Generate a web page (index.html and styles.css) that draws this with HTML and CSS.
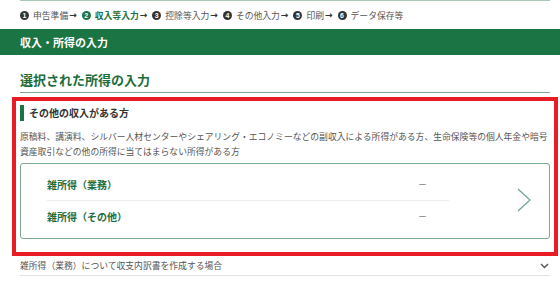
FILE: index.html
```html
<!DOCTYPE html>
<html lang="ja">
<head>
    <meta charset="UTF-8">
    <title>収入・所得の入力</title>
    <link rel="stylesheet" href="styles.css">
</head>
<body>
    <div class="topline"></div>

    <!-- ステップ -->
    <ol class="steps">
        <li><span class="num">1</span>申告準備</li>
        <li class="arrow">→</li>
        <li class="current"><span class="num">2</span>収入等入力</li>
        <li class="arrow">→</li>
        <li><span class="num">3</span>控除等入力</li>
        <li class="arrow">→</li>
        <li><span class="num">4</span>その他入力</li>
        <li class="arrow">→</li>
        <li><span class="num">5</span>印刷</li>
        <li class="arrow">→</li>
        <li><span class="num">6</span>データ保存等</li>
    </ol>

    <div class="band">収入・所得の入力</div>

    <div class="main">
        <h1 class="title">選択された所得の入力</h1>

        <!-- その他の収入 -->
        <div class="section">
            <h2>その他の収入がある方</h2>
            <p class="desc">原稿料、講演料、シルバー人材センターやシェアリング・エコノミーなどの副収入による所得がある方、生命保険等の個人年金や暗号資産取引などの他の所得に当てはまらない所得がある方</p>

            <a class="card" href="#">
                <div class="rows">
                    <div class="row"><span class="name">雑所得（業務）</span><span class="value">－</span></div>
                    <div class="row"><span class="name">雑所得（その他）</span><span class="value">－</span></div>
                </div>
                <svg class="chev" width="15" height="24" viewBox="0 0 15 24">
                    <path d="M1 1 L13 12 L1 23" fill="none" stroke="#6fa489" stroke-width="1.2"/>
                </svg>
            </a>
        </div>

        <div class="accordion">
            <span>雑所得（業務）について収支内訳書を作成する場合</span>
            <svg width="9" height="6" viewBox="0 0 9 6">
                <path d="M1 1 L4.5 4.5 L8 1" fill="none" stroke="#555" stroke-width="1.4"/>
            </svg>
        </div>
    </div>
</body>
</html>
```

FILE: styles.css
```css
/* 基本 */
* {
    margin: 0;
    padding: 0;
    box-sizing: border-box;
}

body {
    background: #fff;
    color: #333;
    font-family: "Noto Sans CJK JP", "Noto Sans", sans-serif;
    width: 560px;
    overflow: hidden;
}

.topline {
    height: 1px;
    margin: 0 10px 0 20px;
    background: #a9c9b6;
}

/* ステップ */
.steps {
    list-style: none;
    display: flex;
    align-items: center;
    height: 28px;
    padding-left: 20px;
    font-size: 8.8px;
    color: #555;
}

.steps li {
    display: flex;
    align-items: center;
}

.steps .num {
    display: inline-flex;
    align-items: center;
    justify-content: center;
    width: 9px;
    height: 9px;
    margin-right: 4px;
    border-radius: 50%;
    background: #333;
    color: #fff;
    font-size: 7px;
    font-weight: bold;
    font-family: "Liberation Sans", sans-serif;
}

.steps .arrow {
    margin: 0 5px 0 1px;
    font-weight: bold;
    color: #333;
    font-family: "DejaVu Sans", sans-serif;
    font-size: 9px;
}

.steps .current {
    color: #1a7443;
    font-weight: bold;
}

.steps .current .num {
    background: #1a7443;
}

/* 見出し帯 */
.band {
    height: 26px;
    line-height: 26px;
    padding-left: 20px;
    background: #1a7443;
    color: #fff;
    font-size: 11px;
    font-weight: bold;
}

.main {
    padding: 0 10px 0 20px;
}

.title {
    margin-top: 16px;
    padding-bottom: 3px;
    line-height: 18px;
    font-size: 13px;
    font-weight: bold;
    color: #1d6e3d;
    border-bottom: 1px solid #7fa893;
}

/* セクション */
.section {
    margin-top: 12px;
    padding-bottom: 9px;
    outline: 4px solid #e81c24;
    outline-offset: 4px;
}

.section h2 {
    border-left: 4px solid #1a7443;
    padding-left: 5px;
    line-height: 16px;
    font-size: 10px;
    font-weight: bold;
    color: #333;
}

.desc {
    margin-top: 8px;
    line-height: 15px;
    font-size: 8.8px;
    color: #555;
}

.card {
    display: flex;
    align-items: center;
    margin-top: 4px;
    padding: 5px 0 7px;
    border: 1px solid #7aab92;
    border-radius: 3px;
    text-decoration: none;
}

.rows {
    width: 402px;
    margin-left: 26px;
}

.row {
    display: flex;
    justify-content: space-between;
    align-items: center;
    height: 32px;
    font-size: 10px;
}

.row:first-child {
    border-bottom: 1px solid #ececec;
}

.row:last-child {
    height: 30px;
}

.row .name {
    color: #1d6e3d;
    font-weight: bold;
}

.row .value {
    margin-right: 22px;
    color: #666;
    font-size: 9px;
}

.chev {
    margin-left: auto;
    margin-right: 17px;
}

/* アコーディオン */
.accordion {
    display: flex;
    justify-content: space-between;
    align-items: center;
    margin-top: 11px;
    padding-bottom: 2px;
    line-height: 14px;
    font-size: 8.8px;
    color: #555;
    border-bottom: 1px solid #e3e3e3;
}

.accordion svg {
    margin-right: 1px;
}
```
